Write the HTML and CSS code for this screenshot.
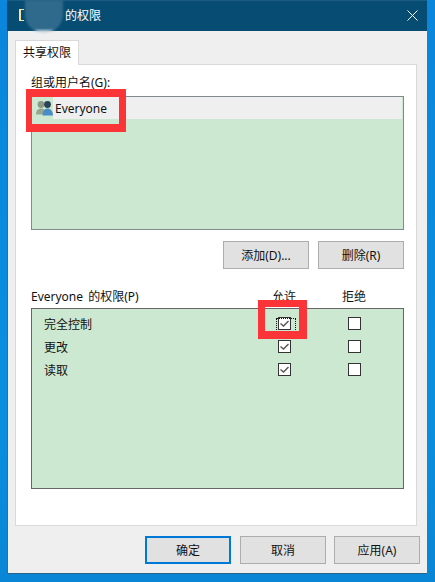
FILE: index.html
```html
<!DOCTYPE html>
<html lang="zh-CN">
<head>
    <meta charset="UTF-8">
    <meta name="viewport" content="width=device-width, initial-scale=1.0">
    <title>的权限</title>
    <link rel="stylesheet" href="styles.css">
</head>
<body>
    <div class="window">
        <div class="titlebar">
            <span class="folder"></span>
            <span class="title">的权限</span>
            <svg class="close" width="11" height="11" viewBox="0 0 11 11">
                <path d="M0.5 0.5L10.5 10.5M10.5 0.5L0.5 10.5" stroke="#fff" stroke-width="1" fill="none"/>
            </svg>
        </div>
        <div class="blur"></div>

        <div class="tabs">
            <div class="tab">共享权限</div>
        </div>

        <div class="page">
            <div class="label">组或用户名(G):</div>
            <div class="list">
                <div class="list-row">
                    <svg class="users" width="17" height="16" viewBox="0 0 17 16">
                        <circle cx="5" cy="4.5" r="3.4" fill="#8d9a84"/>
                        <path d="M0 14.5C0 10.5 2.2 8.5 5 8.5s5 2 5 6z" fill="#98a68f"/>
                        <circle cx="11.5" cy="4.5" r="3.4" fill="#2b4257"/>
                        <path d="M6.5 15.5C6.5 11 8.8 8.5 11.5 8.5S17 11 17 15.5z" fill="#4a8cc6"/>
                    </svg>
                    <span class="list-name">Everyone</span>
                </div>
            </div>
            <div class="list-buttons">
                <button class="btn">添加(D)...</button>
                <button class="btn">删除(R)</button>
            </div>

            <div class="perm-head">
                <span class="perm-title">Everyone 的权限(P)</span>
                <span class="col">允许</span>
                <span class="col">拒绝</span>
            </div>
            <div class="perm-box">
                <div class="perm-row">
                    <span>完全控制</span>
                    <span class="col focus">
                        <span class="check on"><svg width="11" height="11" viewBox="0 0 11 11"><path d="M1.5 5.5L4.5 8L9.5 3" stroke="#555" stroke-width="1.4" fill="none"/></svg></span>
                    </span>
                    <span class="col"><span class="check"></span></span>
                </div>
                <div class="perm-row">
                    <span>更改</span>
                    <span class="col">
                        <span class="check on"><svg width="11" height="11" viewBox="0 0 11 11"><path d="M1.5 5.5L4.5 8L9.5 3" stroke="#555" stroke-width="1.4" fill="none"/></svg></span>
                    </span>
                    <span class="col"><span class="check"></span></span>
                </div>
                <div class="perm-row">
                    <span>读取</span>
                    <span class="col">
                        <span class="check on"><svg width="11" height="11" viewBox="0 0 11 11"><path d="M1.5 5.5L4.5 8L9.5 3" stroke="#555" stroke-width="1.4" fill="none"/></svg></span>
                    </span>
                    <span class="col"><span class="check"></span></span>
                </div>
            </div>
        </div>

        <div class="footer">
            <button class="btn default">确定</button>
            <button class="btn">取消</button>
            <button class="btn apply">应用(A)</button>
        </div>

        <!-- red annotation boxes drawn over the dialog -->
        <div class="mark mark-user"></div>
        <div class="mark mark-check"></div>
    </div>
</body>
</html>
```

FILE: styles.css
```css
body {
    margin: 0;
    height: 582px;
    overflow: hidden;
    background: linear-gradient(180deg, #0a86dc 0%, #0a8fdf 70%, #0a86d6 100%);
    font-family: "Noto Sans", "Noto Sans CJK SC", sans-serif;
    font-size: 12px;
    color: #111;
}

.window {
    position: relative;
    box-sizing: border-box;
    margin-left: 7px;
    width: 420px;
    height: 574px;
    background-color: #efefef;
    border-left: 1px solid #3d6c88;
    border-bottom: 1px solid #2c6488;
    display: flex;
    flex-direction: column;
}

.titlebar {
    box-sizing: border-box;
    height: 31px;
    margin-left: -1px;
    padding: 0 0 2px 12px;
    background-color: #074d73;
    border-top: 1px solid #1c5c80;
    color: #fff;
    display: flex;
    align-items: center;
    font-size: 12px;
}

.folder {
    width: 3px;
    height: 10px;
    border: 1px solid #f7e39a;
    border-left-width: 2px;
    border-right: none;
}

.title {
    margin-left: 41px;
}

.close {
    margin-left: auto;
    margin-right: 9px;
}

.blur {
    position: absolute;
    left: 17px;
    top: 0;
    width: 38px;
    height: 33px;
    border-radius: 0 0 19px 19px;
    background: linear-gradient(180deg, #2f6a8c 30px, #c8d6df 30px);
    filter: blur(1px);
}

.tabs {
    display: flex;
    padding: 9px 0 0 7px;
}

.tab {
    box-sizing: border-box;
    width: 64px;
    height: 25px;
    margin-bottom: -1px;
    background-color: #fff;
    border: 1px solid #d9d9d9;
    border-bottom: none;
    text-align: center;
    line-height: 24px;
    position: relative;
}

.page {
    box-sizing: border-box;
    width: 402px;
    height: 462px;
    margin-left: 7px;
    padding: 9px 12px 0 15px;
    background-color: #fff;
    border: 1px solid #d9d9d9;
}

.label {
    height: 18px;
    line-height: 18px;
}

.list {
    box-sizing: border-box;
    height: 134px;
    margin-top: 4px;
    background-color: #cde8d0;
    border: 1px solid #828a8e;
}

.list-row {
    height: 22px;
    display: flex;
    align-items: center;
}

.users {
    flex-shrink: 0;
    margin-left: 4px;
}

.list-name {
    flex: 1;
    height: 22px;
    line-height: 24px;
    margin-right: 1px;
    padding-left: 2px;
    background-color: #efefef;
}

.list-buttons {
    display: flex;
    justify-content: flex-end;
    gap: 9px;
    margin-top: 11px;
}

.btn {
    box-sizing: border-box;
    width: 86px;
    height: 28px;
    padding: 0;
    background-color: #e1e1e1;
    border: 1px solid #adadad;
    font-family: inherit;
    font-size: 12px;
    color: #111;
}

.btn.default {
    border: 2px solid #0078d7;
}

.btn.apply {
    margin-left: -1px;
}

.perm-head,
.perm-row {
    display: grid;
    grid-template-columns: 1fr 70px 70px;
    align-items: center;
}

.perm-head {
    height: 18px;
    margin-top: 18px;
    padding-right: 15px;
}

.perm-title {
    word-spacing: 2px;
}

.perm-box {
    box-sizing: border-box;
    height: 181px;
    margin-top: 3px;
    padding: 3px 14px 0 12px;
    background-color: #cde8d0;
    border: 1px solid #666;
}

.perm-row {
    height: 23px;
}

.col {
    display: flex;
    justify-content: center;
    align-items: center;
}

.focus {
    position: relative;
}

.focus::after {
    content: "";
    position: absolute;
    left: 27px;
    top: 1px;
    width: 18px;
    height: 16px;
    border: 1px dotted #111;
}

.check {
    box-sizing: border-box;
    width: 13px;
    height: 13px;
    background-color: #fff;
    border: 1px solid #333;
    display: flex;
}

.footer {
    display: flex;
    justify-content: flex-end;
    gap: 9px;
    margin-top: 10px;
    padding-right: 7px;
}

.mark {
    position: absolute;
    box-sizing: border-box;
    border: solid #fb3537;
}

.mark-user {
    left: 18px;
    top: 89px;
    width: 100px;
    height: 43px;
    border-width: 8px 7px 8px 6px;
}

.mark-check {
    left: 250px;
    top: 300px;
    width: 49px;
    height: 39px;
    border-width: 7px 8px 8px 7px;
}
```
